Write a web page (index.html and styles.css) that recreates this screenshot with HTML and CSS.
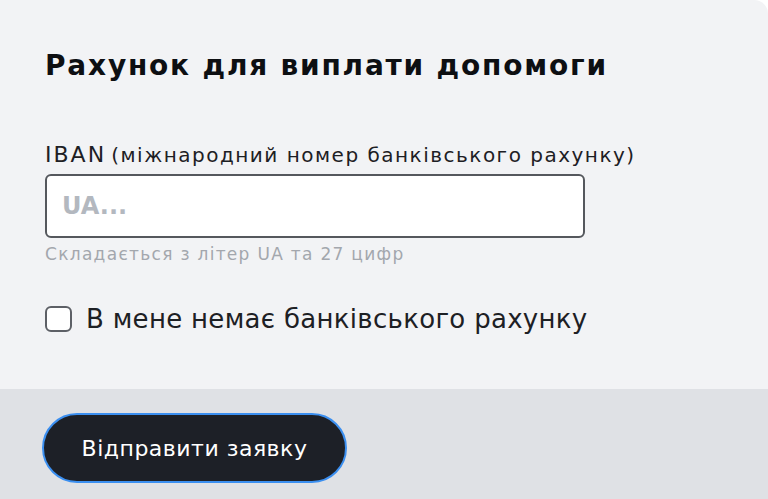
FILE: index.html
```html
<!DOCTYPE html>
<html lang="uk">
<head>
<meta charset="utf-8">
<link rel="stylesheet" href="styles.css">
</head>
<body>
<div class="page">
  <section class="card">
    <h1 class="title">Рахунок для виплати допомоги</h1>
    <div class="field">
      <label class="label" for="iban"><span class="label-main">IBAN</span> <span class="label-sub">(міжнародний номер банківського рахунку)</span></label>
      <input class="input" id="iban" type="text" placeholder="UA...">
      <div class="hint">Складається з літер UA та 27 цифр</div>
    </div>
    <label class="check">
      <span class="box"></span>
      <span class="check-text">В мене немає банківського рахунку</span>
    </label>
  </section>
  <footer class="footer">
    <button class="btn" type="button">Відправити заявку</button>
  </footer>
</div>
</body>
</html>
```

FILE: styles.css
```css
html, body {
  margin: 0;
  padding: 0;
  background: #ffffff;
  font-family: "DejaVu Sans", "Liberation Sans", sans-serif;
  color: #111317;
}
.page {
  width: 768px;
  height: 499px;
  display: flex;
  flex-direction: column;
  overflow: hidden;
}
.card {
  flex: 0 0 389px;
  background: #f2f3f5;
  border-top-right-radius: 14px;
  box-sizing: border-box;
  padding: 46px 45px 0 45px;
}
.title {
  margin: 0;
  font-size: 28px;
  font-weight: 700;
  line-height: 40px;
  letter-spacing: 1.8px;
  color: #0d0f12;
}
.field {
  margin-top: 56px;
}
.label {
  display: block;
  line-height: 26px;
  color: #1d2024;
  white-space: nowrap;
}
.label-main {
  font-size: 22px;
  letter-spacing: 2px;
}
.label-sub {
  font-size: 20px;
  letter-spacing: 1.5px;
}
.input {
  display: block;
  box-sizing: border-box;
  width: 540px;
  height: 64px;
  margin-top: 4px;
  border: 2px solid #55585d;
  border-radius: 6px;
  background: #ffffff;
  padding: 0 15px;
  font-family: "DejaVu Sans", "Liberation Sans", sans-serif;
  font-size: 24px;
  font-weight: 700;
  outline: none;
}
.input::placeholder {
  color: #b3b8bf;
}
.hint {
  margin-top: 6px;
  font-size: 17px;
  line-height: 20px;
  letter-spacing: 1.3px;
  color: #a3a7ad;
  white-space: nowrap;
}
.check {
  display: flex;
  align-items: center;
  gap: 14px;
  margin-top: 40px;
}
.box {
  width: 27px;
  height: 26px;
  box-sizing: border-box;
  border: 2px solid #5d6066;
  border-radius: 6px;
  background: #ffffff;
}
.check-text {
  font-size: 26px;
  line-height: 30px;
  letter-spacing: 0.3px;
  color: #1d2024;
  white-space: nowrap;
}
.footer {
  flex: 1;
  background: #dfe1e5;
  padding: 24px 42px 0;
}
.btn {
  display: flex;
  align-items: center;
  justify-content: center;
  width: 305px;
  height: 70px;
  border-radius: 35px;
  border: 2px solid #3b8ff0;
  background: #1d2027;
  color: #ffffff;
  font-family: "DejaVu Sans", "Liberation Sans", sans-serif;
  font-size: 22px;
  letter-spacing: 0.5px;
  padding: 0;
}
```
